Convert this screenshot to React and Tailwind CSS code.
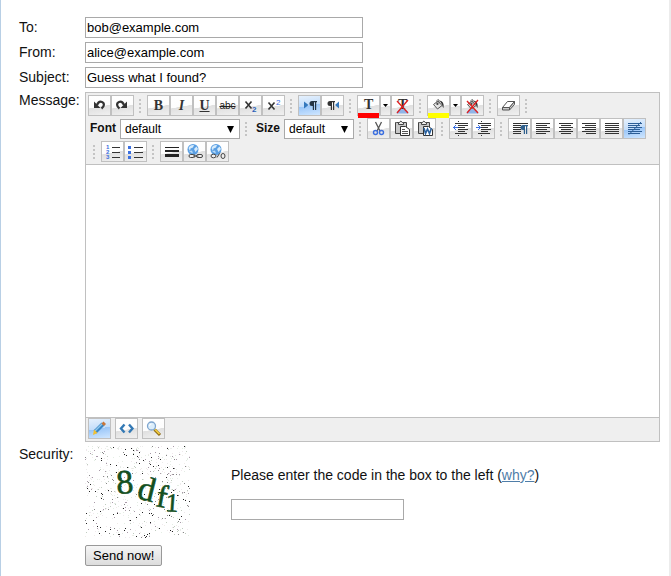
const INK = '#333'
const BLUE = '#3b6fe0'

function IconBox({ children }) {
  return (
    <svg viewBox="0 0 21 19" className="block h-[19px] w-[21px] overflow-visible" fill="none" aria-hidden="true">
      {children}
    </svg>
  )
}

function ToolButton({ label, active, narrow, children }) {
  return (
    <button
      type="button"
      aria-label={label}
      title={label}
      className={
        (narrow ? 'w-[11px] ' : 'w-[23px] ') +
        (active
          ? 'bg-[linear-gradient(170deg,#e6f1fd_0%,#c3ddfa_50%,#9ac6f8_50%,#cfe6ff_100%)] '
          : 'bg-[linear-gradient(170deg,#fff_0%,#fdfdfd_54%,#e0e0e0_56%,#f0f0f0_100%)] ') +
        'flex h-[21px] shrink-0 items-center justify-center border border-[#c0c0c0]'
      }
    >
      {children}
    </button>
  )
}

function Separator() {
  return (
    <span className="mr-[6px] ml-[5px] flex shrink-0 flex-col gap-[2px]">
      <i className="h-[2px] w-[2px] bg-[#c4c4c4]" />
      <i className="h-[2px] w-[2px] bg-[#c4c4c4]" />
      <i className="h-[2px] w-[2px] bg-[#c4c4c4]" />
      <i className="h-[2px] w-[2px] bg-[#c4c4c4]" />
    </span>
  )
}

/* each line is [x, width], stacked two pixels apart */
function Lines({ rows, color = INK }) {
  return rows.map(([x, w], i) => (
    <rect key={i} x={x} y={4 + i * 2} width={w} height="1" fill={color} shapeRendering="crispEdges" />
  ))
}

function UndoArrow() {
  return (
    <>
      <path d="M8 9C9 6.500 11 5.300 13 6c2.700 1 2.500 4.500-.5 6.500" stroke={INK} strokeWidth="2.200" />
      <path d="M5 5.500V12H11.500z" fill={INK} />
    </>
  )
}

function Pilcrow({ x = 0, y = 0, color = INK }) {
  return (
    <g transform={`translate(${x} ${y})`}>
      <path d="M3 0H8V1.200H7.200V9H6V1.200H5V9H3.800V5H3A2.500 2.500 0 0 1 3 0z" fill={color} />
    </g>
  )
}

function Eraser() {
  return (
    <>
      <path d="M4.500 11.500L9.500 5.500H16.500L11.500 11.500z" fill="#fff" stroke="#555" />
      <path d="M4.500 11.500H11.500V14H4.500zM11.500 11.500L16.500 5.500V8.500L11.500 14z" fill="#c9c9c9" stroke="#555" />
    </>
  )
}

function Bucket() {
  return (
    <>
      <path d="M5.500 8.500L10 5L14 9.500L9.500 13z" fill="#e4e4e4" stroke="#555" />
      <path d="M9 8.500V4.500Q9.500 3 11 4V7.500" stroke="#666" />
      <path d="M11.500 4.500Q16.500 5 15.500 12Q14.500 11 14 8.500z" fill="#333" />
      <circle cx="9.500" cy="8" r="1" fill="#444" />
    </>
  )
}

function LetterT() {
  return (
    <text x="6" y="13" fontSize="14" fontWeight="bold" className='font-["Liberation_Serif",serif]' fill={INK}>T</text>
  )
}

function RedCross() {
  return (
    <>
      <path d="M4.500 17.500Q5.500 13 10.500 13T16.500 17.500z" fill="#8fb4e8" />
      <path d="M5 5L16 17M16 4L5 17" stroke="#e02020" strokeWidth="1.300" />
    </>
  )
}

function Clipboard() {
  return (
    <>
      <path d="M5.500 3.500H15.500V14.500H4.500V3.500z" fill="#c8c8c8" stroke="#444" />
      <path d="M7.500 5.500V3.500H8.500Q9.500 .5 11.500 3.500H12.500V5.500z" fill="#eee" stroke="#444" />
      <path d="M9.500 7.500H14.500L18.500 10.500V16.500H9.500z" fill="#fff" stroke="#333" />
    </>
  )
}

function Globe() {
  return (
    <>
      <circle cx="9" cy="7.500" r="5.500" fill="#5a9fe3" />
      <path d="M4.500 6Q6 2.500 10 3L9 5.500L6.500 6.500L6 9zM10 7L12.500 4.500L14 7L11.500 10z" fill="#d6ebfb" />
      <path d="M5 9.500L8 8.500L9 11.500z" fill="#b8daf6" />
    </>
  )
}

function Caret() {
  return (
    <svg viewBox="0 0 5 3" className="block h-[3px] w-[5px]" aria-hidden="true">
      <path d="M0 0H5L2.500 3z" fill="#000" />
    </svg>
  )
}

function Select({ id, width }) {
  return (
    <span className={'relative flex shrink-0 ' + width}>
      <select
        id={id}
        className="h-[20px] w-full appearance-none border border-[#a9a9a9] bg-white pl-[4px] text-[12px] leading-[16px] text-black"
      >
        <option>default</option>
      </select>
      <svg viewBox="0 0 7 7" className="pointer-events-none absolute top-[7px] right-[6px] h-[7px] w-[7px]" aria-hidden="true">
        <path d="M0 0H7L3.500 7z" fill="#000" />
      </svg>
    </span>
  )
}

const glyph = 'font-["Liberation_Serif",serif] text-[14px] leading-[19px] text-[#333]'

const alignments = [
  { label: 'Align left', rows: [[4, 14], [4, 11], [4, 14], [4, 11], [4, 14], [4, 10]] },
  { label: 'Align center', rows: [[4, 14], [6, 10], [4, 14], [6, 10], [4, 14], [6, 10]] },
  { label: 'Align right', rows: [[4, 14], [7, 11], [4, 14], [7, 11], [4, 14], [8, 10]] },
  { label: 'Justify', rows: [[4, 14], [4, 14], [4, 14], [4, 14], [4, 14], [4, 14]] },
]

const indentRows = [[5, 13], [9, 9], [9, 6], [9, 9], [9, 6], [5, 12]]

function Toolbar() {
  return (
    <div className="border-b border-[#c0c0c0] bg-[#efefef] px-[2px] py-px">
      <div className="flex h-[23px] items-center">
        <ToolButton label="Undo"><IconBox><UndoArrow /></IconBox></ToolButton>
        <ToolButton label="Redo">
          <IconBox><g transform="translate(20 0) scale(-1 1)"><UndoArrow /></g></IconBox>
        </ToolButton>
        <Separator />
        <ToolButton label="Bold"><span className={glyph + ' font-bold'}>B</span></ToolButton>
        <ToolButton label="Italic"><span className={glyph + ' font-bold italic'}>I</span></ToolButton>
        <ToolButton label="Underline"><span className={glyph + ' font-bold underline'}>U</span></ToolButton>
        <ToolButton label="Strikethrough">
          <span className="text-[10px] leading-[19px] text-[#222] line-through">abc</span>
        </ToolButton>
        <ToolButton label="Subscript">
          <IconBox>
            <path d="M5.500 5.500L11.500 12.500M11.500 5.500L5.500 12.500" stroke={INK} strokeWidth="1.600" />
            <text x="12" y="16" fontSize="8" fontWeight="bold" fill="#2b5fb8">2</text>
          </IconBox>
        </ToolButton>
        <ToolButton label="Superscript">
          <IconBox>
            <path d="M5.500 6.500L11.500 13.500M11.500 6.500L5.500 13.500" stroke={INK} strokeWidth="1.600" />
            <text x="13" y="9" fontSize="8" fill={BLUE}>2</text>
          </IconBox>
        </ToolButton>
        <Separator />
        <ToolButton label="Left to right" active>
          <IconBox>
            <path d="M5 5.500V12.500L9.500 9z" fill="#3478bd" />
            <Pilcrow x={10} y={5} color="#234" />
          </IconBox>
        </ToolButton>
        <ToolButton label="Right to left">
          <IconBox>
            <Pilcrow x={5} y={5} />
            <path d="M17 5.500V12.500L13 9z" fill="#3478bd" />
          </IconBox>
        </ToolButton>
        <Separator />
        <ToolButton label="Text color">
          <IconBox>
            <LetterT />
            <rect y="17" width="21" height="5" fill="#f00" />
          </IconBox>
        </ToolButton>
        <ToolButton label="Choose text color" narrow><Caret /></ToolButton>
        <ToolButton label="Remove text color"><IconBox><LetterT /><RedCross /></IconBox></ToolButton>
        <Separator />
        <ToolButton label="Background color">
          <IconBox>
            <Bucket />
            <rect y="17" width="21" height="5" fill="#ff0" />
          </IconBox>
        </ToolButton>
        <ToolButton label="Choose background color" narrow><Caret /></ToolButton>
        <ToolButton label="Remove background color"><IconBox><Bucket /><RedCross /></IconBox></ToolButton>
        <Separator />
        <ToolButton label="Remove formatting"><IconBox><Eraser /></IconBox></ToolButton>
        <Separator />
      </div>

      <div className="flex h-[23px] items-center">
        <label htmlFor="font" className="w-[32px] shrink-0 pb-[2px] pl-[2px] text-[12px] font-bold text-[#111]">Font</label>
        <Select id="font" width="w-[120px]" />
        <Separator />
        <label htmlFor="size" className="w-[31px] shrink-0 pb-[2px] pl-[3px] text-[12px] font-bold text-[#111]">Size</label>
        <Select id="size" width="w-[70px]" />
        <Separator />
        <ToolButton label="Cut">
          <IconBox>
            <path d="M7.500 3L12 12M13.500 3L9 12" stroke="#555" strokeWidth="1.300" />
            <circle cx="7.500" cy="13.500" r="2" stroke={BLUE} strokeWidth="1.400" />
            <circle cx="13.500" cy="13.500" r="2" stroke={BLUE} strokeWidth="1.400" />
          </IconBox>
        </ToolButton>
        <ToolButton label="Paste">
          <IconBox>
            <Clipboard />
            <path d="M11 10.500H14M11 12.500H17M11 14.500H17" stroke="#555" />
          </IconBox>
        </ToolButton>
        <ToolButton label="Paste from Word">
          <IconBox>
            <Clipboard />
            <path d="M10 9L11.500 14.500L13.500 10L15.500 14.500L17.500 9" stroke="#2a62a0" strokeWidth="1.600" />
          </IconBox>
        </ToolButton>
        <Separator />
        <ToolButton label="Outdent">
          <IconBox>
            <Lines rows={indentRows} />
            <path d="M3 8.500H8M6 6L3.500 8.500L6 11" stroke={BLUE} />
            <path d="M8.500 2V17" stroke={INK} strokeDasharray="1 1" />
          </IconBox>
        </ToolButton>
        <ToolButton label="Indent">
          <IconBox>
            <Lines rows={indentRows} />
            <path d="M3 8.500H8M5 6L7.500 8.500L5 11" stroke={BLUE} />
            <path d="M8.500 2V17" stroke={INK} strokeDasharray="1 1" />
          </IconBox>
        </ToolButton>
        <Separator />
        <ToolButton label="Paragraph">
          <IconBox>
            <Lines rows={[[4, 15], [4, 8], [4, 8], [4, 8], [4, 8], [4, 8]]} />
            <Pilcrow x={11} y={6} color="#2f5f8c" />
          </IconBox>
        </ToolButton>
        {alignments.map(({ label, rows }) => (
          <ToolButton key={label} label={label}><IconBox><Lines rows={rows} /></IconBox></ToolButton>
        ))}
        <ToolButton label="No alignment" active>
          <IconBox>
            <Lines rows={[[4, 14], [4, 12], [4, 14], [4, 12], [4, 14], [4, 12]]} color="#2c5e96" />
            <path d="M5 15.500L17 3" stroke="#2c5e96" />
          </IconBox>
        </ToolButton>
      </div>

      <div className="flex h-[23px] items-center">
        <Separator />
        <ToolButton label="Numbered list">
          <IconBox>
            <path d="M10 5.500H18M10 10.500H18M10 15.500H18" stroke={INK} />
            <text x="4" y="7" fontSize="6" fontWeight="bold" fill={BLUE}>1</text>
            <text x="4" y="12" fontSize="6" fontWeight="bold" fill={BLUE}>2</text>
            <text x="4" y="17" fontSize="6" fontWeight="bold" fill={BLUE}>3</text>
          </IconBox>
        </ToolButton>
        <ToolButton label="Bulleted list">
          <IconBox>
            <path d="M9 5.500H18M9 10.500H18M9 15.500H18" stroke={INK} />
            <path d="M3 4H6V7H3zM3 9H6V12H3zM3 14H6V17H3z" fill={BLUE} />
          </IconBox>
        </ToolButton>
        <Separator />
        <ToolButton label="Horizontal rule">
          <IconBox><path d="M4 5H18V6H4zM4 8H18V10H4zM4 12H18V15H4z" fill="#222" /></IconBox>
        </ToolButton>
        <ToolButton label="Insert link">
          <IconBox>
            <Globe />
            <rect x="5" y="12.500" width="6" height="3" rx="1.500" fill="#eee" stroke="#444" />
            <rect x="12.500" y="12.500" width="6" height="3" rx="1.500" fill="#eee" stroke="#444" />
            <path d="M9 14H14.500" stroke="#444" />
          </IconBox>
        </ToolButton>
        <ToolButton label="Remove link">
          <IconBox>
            <Globe />
            <ellipse cx="6.500" cy="14" rx="2.500" ry="1.800" fill="#eee" stroke="#444" />
            <ellipse cx="16" cy="14" rx="2" ry="2.500" fill="#eee" stroke="#444" />
            <path d="M10 15.500L12.500 11.500" stroke="#444" />
          </IconBox>
        </ToolButton>
      </div>
    </div>
  )
}

function ModeBar() {
  return (
    <div className="flex h-[24px] gap-[4px] border-t border-[#c0c0c0] bg-[#efefef] px-[2px]">
      <ToolButton label="Design" active>
        <IconBox>
          <path d="M6 13L14 5" stroke="#3a86c4" strokeWidth="4" />
          <path d="M6 12L13.500 4.500" stroke="#8fc8ee" strokeWidth="1.500" />
          <path d="M12.500 4.500L14.500 2.500L17 5L15 7z" fill="#c8763a" />
          <path d="M5 10.500L8.500 14L4 16z" fill="#f2c030" />
        </IconBox>
      </ToolButton>
      <ToolButton label="HTML">
        <IconBox><path d="M8.500 5.500L5 9.500L8.500 13.500M13 5.500L16.500 9.500L13 13.500" stroke="#3379b5" strokeWidth="2.400" /></IconBox>
      </ToolButton>
      <ToolButton label="Preview">
        <IconBox>
          <path d="M11.500 10.500L17 16" stroke="#8b6914" strokeWidth="3" />
          <path d="M12 10.500L16.500 15" stroke="#f5cf3e" strokeWidth="1.600" />
          <circle cx="8.500" cy="7" r="4" fill="#dceefb" stroke="#7fa6cf" strokeWidth="1.300" />
          <path d="M6.500 7Q6.500 5 8.500 5" stroke="#fff" />
        </IconBox>
      </ToolButton>
    </div>
  )
}

function makeSpecks(count) {
  const colors = ['#222', '#888', '#a99aa9', '#c0ccc0', '#e4ece4', '#ececec', '#efe8ec', '#e4eee4', '#f0ece8']
  let seed = 77
  const next = () => {
    seed = (seed * 16807) % 2147483647
    return seed / 2147483647
  }
  return Array.from({ length: count }, () => ({
    x: Math.floor(next() * 105),
    y: Math.floor(next() * 92),
    color: colors[Math.floor(next() * colors.length)],
  }))
}

const specks = makeSpecks(760)

const codeLetters = [
  { char: '8', x: 32, y: 48, angle: -4, size: 34 },
  { char: 'd', x: 51, y: 52, angle: 14, size: 34 },
  { char: 'f', x: 70, y: 60, angle: 10, size: 32 },
  { char: '1', x: 80, y: 65, angle: 4, size: 26 },
]

function Captcha() {
  return (
    <svg viewBox="0 0 105 92" className="h-[92px] w-[105px] shrink-0" role="img" aria-label="Security code">
      {specks.map(({ x, y, color }, i) => (
        <rect key={i} x={x} y={y} width="1" height="1" fill={color} />
      ))}
      {codeLetters.map(({ char, x, y, angle, size }) => (
        <text
          key={char}
          x={x}
          y={y}
          fontSize={size}
          transform={`rotate(${angle} ${x} ${y})`}
          className='font-["Liberation_Serif",serif]'
          fill="#14501f"
          stroke="#14501f"
          strokeWidth=".6"
        >
          {char}
        </text>
      ))}
    </svg>
  )
}

const fields = [
  { id: 'to', label: 'To:', value: 'bob@example.com' },
  { id: 'from', label: 'From:', value: 'alice@example.com' },
  { id: 'subject', label: 'Subject:', value: 'Guess what I found?' },
]

export default function App() {
  return (
    <div className='min-h-screen border-r-2 border-l border-r-[#ececec] border-l-[#b8cfe5] bg-white pt-[15px] pr-[9px] pl-[18px] font-["Liberation_Sans",Arial,sans-serif] text-[14px] leading-[20px] text-[#111]'>
      <form>
        {fields.map(({ id, label, value }) => (
          <div key={id} className="flex h-[25px] items-center">
            <label htmlFor={id} className="w-[66px] shrink-0 pb-[2px]">{label}</label>
            <input
              id={id}
              defaultValue={value}
              className="h-[21px] w-[278px] border border-[#a9a9a9] px-px text-[13px] text-black"
            />
          </div>
        ))}

        <div className="mt-[2px] flex">
          <label htmlFor="message" className="-mt-[2px] w-[66px] shrink-0">Message:</label>
          <div className="min-w-0 flex-1 border border-[#c0c0c0]">
            <Toolbar />
            <textarea id="message" className="block h-[252px] w-full resize-none bg-white outline-none" />
            <ModeBar />
          </div>
        </div>

        <div className="mt-[4px] flex">
          <label htmlFor="code" className="-mt-[2px] w-[66px] shrink-0">Security:</label>
          <Captcha />
          <div className="ml-[41px] flex flex-col pt-[19px]">
            <p>
              Please enter the code in the box to the left (
              <a href="#why" className="text-[#4f7da8] underline">why?</a>)
            </p>
            <input id="code" className="mt-[14px] h-[21px] w-[173px] border border-[#a9a9a9]" />
          </div>
        </div>

        <button
          type="submit"
          className="mt-[7px] ml-[66px] block h-[21px] rounded-[2px] border border-[#999] bg-linear-to-b from-[#f6f6f6] to-[#dcdcdc] px-[7px] text-[13px] leading-[19px] text-black"
        >
          Send now!
        </button>
      </form>
    </div>
  )
}
